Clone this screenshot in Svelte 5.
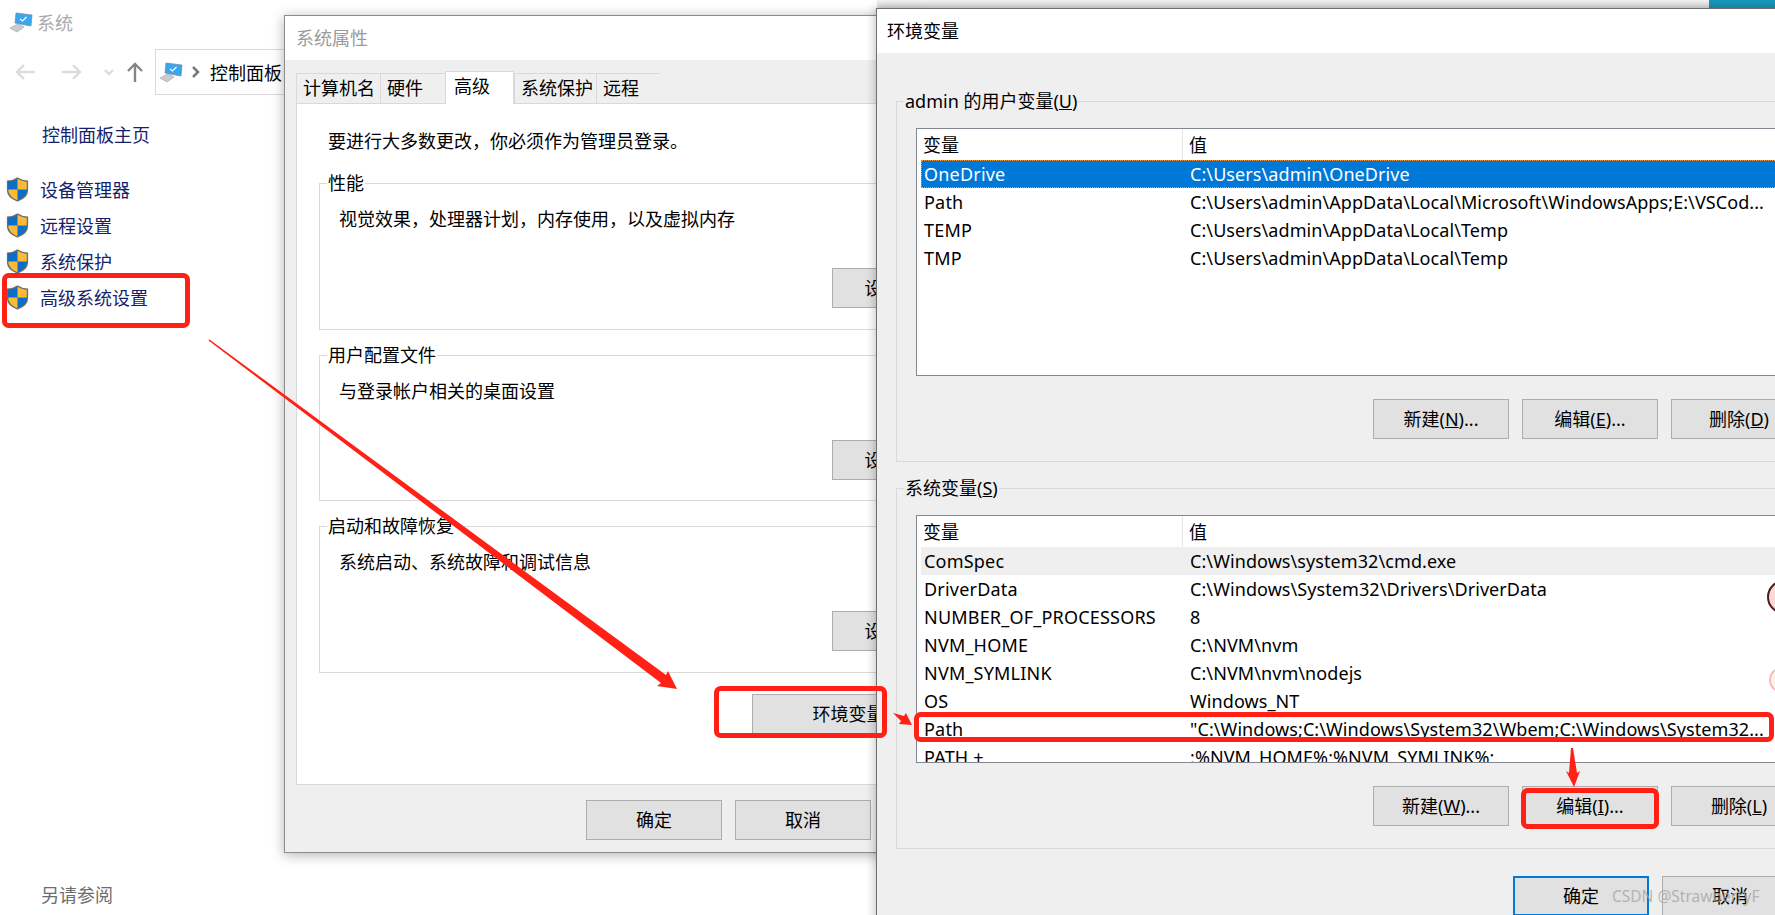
<script>
  const navLinks = ['设备管理器', '远程设置', '系统保护', '高级系统设置'];
  const tabs = [
    { label: '计算机名', width: 84 },
    { label: '硬件', width: 65 },
    { label: '高级', width: 69, active: true },
    { label: '系统保护', width: 82 },
    { label: '远程', width: 64 }
  ];
  const sections = [
    { legend: '性能', text: '视觉效果，处理器计划，内存使用，以及虚拟内存' },
    { legend: '用户配置文件', text: '与登录帐户相关的桌面设置' },
    { legend: '启动和故障恢复', text: '系统启动、系统故障和调试信息' }
  ];
  const userVars = [
    ['OneDrive', 'C:\\Users\\admin\\OneDrive'],
    ['Path', 'C:\\Users\\admin\\AppData\\Local\\Microsoft\\WindowsApps;E:\\VSCod...'],
    ['TEMP', 'C:\\Users\\admin\\AppData\\Local\\Temp'],
    ['TMP', 'C:\\Users\\admin\\AppData\\Local\\Temp']
  ];
  const sysVars = [
    ['ComSpec', 'C:\\Windows\\system32\\cmd.exe'],
    ['DriverData', 'C:\\Windows\\System32\\Drivers\\DriverData'],
    ['NUMBER_OF_PROCESSORS', '8'],
    ['NVM_HOME', 'C:\\NVM\\nvm'],
    ['NVM_SYMLINK', 'C:\\NVM\\nvm\\nodejs'],
    ['OS', 'Windows_NT'],
    ['Path', '"C:\\Windows;C:\\Windows\\System32\\Wbem;C:\\Windows\\System32...'],
    ['PATH +', ':%NVM_HOME%;%NVM_SYMLINK%;']
  ];
</script>

{#snippet pc()}
  <svg class="pc" width="24" height="22" viewBox="0 0 24 22">
    <polygon points="7,2 23,4 22,15 6,12" fill="#3aa6ee" stroke="#7b8f9f" stroke-width="0.8" />
    <path d="M11 8l2.5 2 4-4" fill="none" stroke="#fff" stroke-width="1.2" />
    <polygon points="1,17 9,13 15,16 8,21" fill="#c9cdd0" stroke="#9aa0a4" stroke-width="0.6" />
  </svg>
{/snippet}

{#snippet shield()}
  <svg width="23" height="25" viewBox="0 0 23 25">
    <path d="M11.5 1 C8 3.5 5 4 1.5 4 V13 C1.5 18.500 6 22 11.500 24 C17 22 21.500 18.500 21.500 13 V4 C18 4 15 3.500 11.500 1Z" fill="#0a6ecb" stroke="#6d6a5f" stroke-width="1.200" />
    <path d="M11.5 1.800 C15 4 18 4.600 20.800 4.700 V12.500 H11.500Z" fill="#fdbb35" />
    <path d="M2.200 12.500 H11.500 V23.200 C6.500 21.300 2.400 18 2.200 12.500Z" fill="#fdbb35" />
  </svg>
{/snippet}

{#snippet varList(rows, selected)}
  <div class="list">
    <div class="list-head"><span>变量</span><span>值</span></div>
    {#each rows as row, i}
      <div class="row" class:selected={i === 0 && selected} class:idle={i === 0 && !selected}>
        <span class="name">{row[0]}</span><span class="value">{row[1]}</span>
      </div>
    {/each}
  </div>
{/snippet}

<div class="desktop">
  <div class="explorer">
    <div class="win-title">
      {@render pc()}
      <span>系统</span>
    </div>
    <div class="toolbar">
      <svg width="134" height="24" viewBox="0 0 134 24" fill="none" stroke-width="2.400">
        <path d="M20 12H2M9 5l-7 7 7 7" stroke="#dcdcdc" />
        <path d="M47 12h18M58 5l7 7-7 7" stroke="#dcdcdc" />
        <path d="M90 10l4 4 4-4" stroke="#dcdcdc" />
        <path d="M120 22V4M113 11l7-7 7 7" stroke="#858585" />
      </svg>
      <div class="address">
        {@render pc()}
        <svg width="10" height="14" viewBox="0 0 10 14"><path d="M2 2l5 5-5 5" fill="none" stroke="#777" stroke-width="2.500" /></svg>
        <span>控制面板</span>
      </div>
    </div>
    <div class="home-link">控制面板主页</div>
    <ul class="nav">
      {#each navLinks as link}
        <li>{@render shield()}<span>{link}</span></li>
      {/each}
    </ul>
    <div class="see-also">另请参阅</div>
  </div>

  <div class="top-strip"></div>
  <div class="teal"></div>

  <section class="dialog props">
    <header>系统属性</header>
    <div class="tabs">
      {#each tabs as tab}
        <div class="tab" class:active={tab.active} style="width:{tab.width}px">{tab.label}</div>
      {/each}
    </div>
    <div class="panel">
      <p class="intro">要进行大多数更改，你必须作为管理员登录。</p>
      {#each sections as s}
        <div class="section">
          <span class="legend white">{s.legend}</span>
          <p>{s.text}</p>
          <button class="settings">设置(S)...</button>
        </div>
      {/each}
      <button class="env-btn">环境变量(N)...</button>
    </div>
    <div class="props-foot">
      <button>确定</button>
      <button>取消</button>
    </div>
  </section>

  <section class="dialog env">
    <header>环境变量</header>
    <div class="group first">
      <span class="legend">admin 的用户变量(<u>U</u>)</span>
      {@render varList(userVars, true)}
      <div class="actions">
        <button>新建(<u>N</u>)...</button>
        <button>编辑(<u>E</u>)...</button>
        <button>删除(<u>D</u>)</button>
      </div>
    </div>
    <div class="group">
      <span class="legend">系统变量(<u>S</u>)</span>
      {@render varList(sysVars, false)}
      <div class="actions">
        <button>新建(<u>W</u>)...</button>
        <button>编辑(<u>I</u>)...</button>
        <button>删除(<u>L</u>)</button>
      </div>
    </div>
    <div class="env-foot">
      <button class="primary">确定</button>
      <button>取消</button>
    </div>
  </section>

  <div class="blob dark"></div>
  <div class="blob pink"></div>

  <svg class="marks" width="1775" height="915" viewBox="0 0 1775 915">
    <g fill="none" stroke="#ff2116" stroke-width="5">
      <rect x="4.500" y="275.500" width="183" height="50" rx="4" />
      <rect x="716.500" y="688.500" width="168" height="47" rx="4" />
      <rect x="916.500" y="714.500" width="855" height="25" rx="4" />
      <rect x="1523.500" y="790.500" width="133" height="36" rx="4" />
    </g>
    <g fill="#ff2116">
      <polygon points="209.500,339.500 208.500,340.500 661,683 657,686 677,689 668,671 666,675" />
      <polygon points="893,713 904,716 906,713 912,725 899,724 901,721" />
      <polygon points="1571,748 1573,748 1577,773 1580,771 1574,787 1566,771 1569,773" />
    </g>
  </svg>

  <div class="watermark">CSDN @StrawberryF</div>
</div>

<style>
  :global(body) {
    margin: 0;
    background: #fff;
  }
  .desktop {
    position: relative;
    width: 1775px;
    height: 915px;
    overflow: hidden;
    background: #fff;
    color: #000;
    font-family: "Noto Sans", "Noto Sans CJK SC", sans-serif;
    font-size: 18px;
  }
  p, ul {
    margin: 0;
    padding: 0;
  }
  .explorer {
    display: flex;
    flex-direction: column;
    height: 915px;
  }
  .win-title {
    box-sizing: border-box;
    display: flex;
    align-items: center;
    gap: 4px;
    height: 44px;
    padding: 0 0 1px 9px;
    color: #a9a9a9;
  }
  .toolbar {
    display: flex;
    align-items: center;
    gap: 6px;
    height: 46px;
    margin-top: 5px;
    padding-left: 15px;
  }
  .address {
    display: flex;
    align-items: center;
    gap: 8px;
    width: 300px;
    height: 44px;
    padding-left: 3px;
    border: 1px solid #d9d9d9;
  }
  .address span {
    margin-left: 1px;
  }
  .home-link {
    margin-top: 26px;
    padding-left: 42px;
    line-height: 28px;
    color: #14226b;
  }
  .nav {
    margin-top: 22px;
    list-style: none;
    color: #14226b;
  }
  .nav li {
    display: flex;
    align-items: center;
    gap: 11px;
    height: 36px;
    padding-left: 6px;
  }
  .see-also {
    margin-top: auto;
    padding: 0 0 6px 41px;
    line-height: 28px;
    color: #6d6d6d;
  }
  .top-strip {
    position: absolute;
    left: 877px;
    top: 0;
    width: 832px;
    height: 9px;
    background: linear-gradient(#f6f6f6, #dedede);
  }
  .teal {
    position: absolute;
    left: 1709px;
    top: 0;
    width: 66px;
    height: 9px;
    background: #1a98bd;
  }
  .dialog {
    position: absolute;
    box-sizing: border-box;
    background: #efefef;
  }
  .dialog header {
    box-sizing: border-box;
    display: flex;
    align-items: center;
    height: 44px;
    padding-bottom: 2px;
    background: #fff;
  }
  button {
    box-sizing: border-box;
    width: 136px;
    height: 40px;
    padding: 0 0 2px;
    border: 1px solid #adadad;
    background: #e1e1e1;
    color: #000;
    font: inherit;
  }
  .props {
    left: 284px;
    top: 15px;
    width: 640px;
    height: 838px;
    border: 1px solid #8c8c8c;
    box-shadow: 0 2px 12px rgba(0, 0, 0, 0.3);
  }
  .props header {
    padding-left: 11px;
    color: #9a9a9a;
  }
  .tabs {
    display: flex;
    align-items: flex-end;
    height: 43px;
    margin-left: 11px;
  }
  .tab {
    box-sizing: border-box;
    height: 30px;
    padding-left: 6px;
    border: 1px solid #d9d9d9;
    border-bottom: none;
    border-right: none;
    line-height: 28px;
  }
  .tab.active {
    position: relative;
    height: 33px;
    margin-bottom: -1px;
    padding-left: 8px;
    border-right: 1px solid #d9d9d9;
    background: #fff;
    line-height: 28px;
  }
  .panel {
    box-sizing: border-box;
    height: 682px;
    margin-left: 11px;
    padding: 23px 0 0 22px;
    border: 1px solid #d9d9d9;
    background: #fff;
  }
  .intro {
    margin-left: 9px;
    margin-bottom: 28px;
    line-height: 28px;
  }
  .section {
    position: relative;
    box-sizing: border-box;
    height: 146.5px;
    margin-bottom: 25px;
    padding: 21px 0 0 19px;
    border: 1px solid #d9d9d9;
  }
  .section p {
    line-height: 28px;
  }
  .legend {
    position: absolute;
    left: 7px;
    top: -15px;
    padding: 0 1px;
    line-height: 28px;
    background: #efefef;
  }
  .legend.white {
    background: #fff;
  }
  .settings {
    margin: 35px 0 0 493px;
  }
  .env-btn {
    width: 232px;
    margin: -3.5px 0 0 433px;
  }
  .props-foot {
    display: flex;
    gap: 13px;
    margin: 15px 0 0 301px;
  }
  .env {
    left: 876px;
    top: 8px;
    width: 1000px;
    height: 960px;
    border: 1px solid #6f6f6f;
    box-shadow: 0 0 10px rgba(0, 0, 0, 0.3);
  }
  .env header {
    padding-left: 10px;
  }
  .group {
    position: relative;
    box-sizing: border-box;
    margin: 26px 0 0 19px;
    padding: 26px 0 22px 19px;
    border: 1px solid #d9d9d9;
  }
  .group.first {
    margin-top: 48px;
  }
  .list {
    box-sizing: border-box;
    height: 248px;
    overflow: hidden;
    background: #fff;
    border: 1px solid #828790;
    line-height: 28px;
    white-space: nowrap;
  }
  .list-head {
    display: flex;
    height: 31px;
    line-height: 33px;
  }
  .list-head span:first-child {
    box-sizing: border-box;
    width: 266px;
    padding-left: 6px;
    border-right: 1px solid #e5e5e5;
  }
  .list-head span:last-child {
    padding-left: 6px;
  }
  .row {
    display: grid;
    grid-template-columns: 266px 1fr;
    height: 28px;
    margin-left: 4px;
    padding-left: 3px;
  }
  .name {
    letter-spacing: 0.2px;
  }
  .value {
    letter-spacing: 0.08px;
  }
  .row.selected {
    box-sizing: border-box;
    background: #0078d7;
    color: #fff;
    outline: 1px dotted #e89a4a;
    outline-offset: -1px;
  }
  .row.idle {
    background: #efefef;
  }
  .actions {
    display: flex;
    gap: 13px;
    margin: 23px 0 0 457px;
  }
  .env-foot {
    display: flex;
    gap: 13px;
    margin: 27px 0 0 636px;
  }
  .primary {
    border: 2px solid #0078d7;
  }
  .blob {
    position: absolute;
    box-sizing: border-box;
    border-radius: 50%;
  }
  .blob.dark {
    left: 1767px;
    top: 580px;
    width: 34px;
    height: 34px;
    border: 2px solid #4a1f1f;
    background: #fcd7d7;
  }
  .blob.pink {
    left: 1769px;
    top: 667px;
    width: 26px;
    height: 26px;
    border: 2px solid #f6bccb;
    background: #fdf3df;
  }
  .marks {
    position: absolute;
    left: 0;
    top: 0;
    pointer-events: none;
  }
  .watermark {
    position: absolute;
    left: 1612px;
    top: 884px;
    color: rgba(165, 165, 165, 0.8);
    font-size: 15.5px;
    line-height: 24px;
    white-space: nowrap;
  }
</style>
